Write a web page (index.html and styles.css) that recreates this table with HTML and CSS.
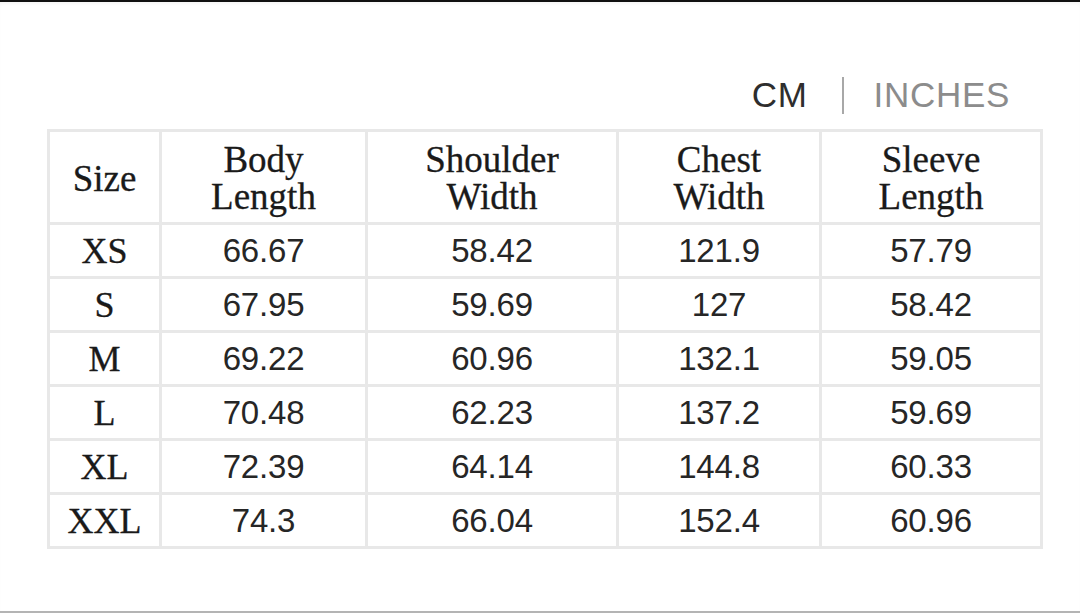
FILE: index.html
```html
<!DOCTYPE html>
<html lang="en">
<head>
<meta charset="utf-8">
<title>Size Chart</title>
<link rel="stylesheet" href="styles.css">
</head>
<body>
<div class="page">
  <div class="units">
    <span class="unit active">CM</span>
    <span class="divider"></span>
    <span class="unit">INCHES</span>
  </div>
  <div class="chart">
    <div class="cell head">Size</div>
    <div class="cell head">Body<br>Length</div>
    <div class="cell head">Shoulder<br>Width</div>
    <div class="cell head">Chest<br>Width</div>
    <div class="cell head">Sleeve<br>Length</div>

    <div class="cell size">XS</div>
    <div class="cell num">66.67</div>
    <div class="cell num">58.42</div>
    <div class="cell num">121.9</div>
    <div class="cell num">57.79</div>

    <div class="cell size">S</div>
    <div class="cell num">67.95</div>
    <div class="cell num">59.69</div>
    <div class="cell num">127</div>
    <div class="cell num">58.42</div>

    <div class="cell size">M</div>
    <div class="cell num">69.22</div>
    <div class="cell num">60.96</div>
    <div class="cell num">132.1</div>
    <div class="cell num">59.05</div>

    <div class="cell size">L</div>
    <div class="cell num">70.48</div>
    <div class="cell num">62.23</div>
    <div class="cell num">137.2</div>
    <div class="cell num">59.69</div>

    <div class="cell size">XL</div>
    <div class="cell num">72.39</div>
    <div class="cell num">64.14</div>
    <div class="cell num">144.8</div>
    <div class="cell num">60.33</div>

    <div class="cell size">XXL</div>
    <div class="cell num">74.3</div>
    <div class="cell num">66.04</div>
    <div class="cell num">152.4</div>
    <div class="cell num">60.96</div>
  </div>
</div>
</body>
</html>
```

FILE: styles.css
```css
* {
  box-sizing: border-box;
}

html, body {
  margin: 0;
  padding: 0;
  background: #ffffff;
}

body {
  width: 1080px;
  height: 613px;
  overflow: hidden;
}

.page {
  height: 613px;
  border-top: 2px solid #111111;
  border-bottom: 2px solid #b4b4b4;
  padding: 72px 0 0 47px;
  display: flex;
  flex-direction: column;
  box-shadow: inset 0 3px 4px -2px rgba(0, 0, 0, 0.06);
}

.units {
  width: 963px;
  height: 42px;
  display: flex;
  justify-content: flex-end;
  align-items: center;
  font-family: "Liberation Sans", Arial, sans-serif;
  font-size: 35px;
  letter-spacing: 0.7px;
}

.unit {
  color: #8c8c8c;
}

.unit.active {
  color: #2e2e2e;
}

.divider {
  width: 2px;
  height: 37px;
  background: #a8a8a8;
  margin: 0 30px 0 34px;
}

.chart {
  margin-top: 13px;
  width: 996px;
  display: grid;
  grid-template-columns: 109px 203px 248px 200px 218px;
  grid-template-rows: 90px repeat(6, 51px);
  gap: 3px;
  padding: 3px;
  background: #e8e8e8;
}

.cell {
  background: #ffffff;
  display: flex;
  align-items: center;
  justify-content: center;
  text-align: center;
  color: #1a1a1a;
}

.head {
  font-family: "Liberation Serif", "Times New Roman", serif;
  font-size: 37px;
  line-height: 37px;
  padding-top: 2px;
  -webkit-text-stroke: 0.3px #1a1a1a;
}

.size {
  font-family: "Liberation Serif", "Times New Roman", serif;
  font-size: 36px;
  -webkit-text-stroke: 0.3px #1a1a1a;
}

.num {
  font-family: "Liberation Sans", Arial, sans-serif;
  font-size: 33px;
  color: #262626;
  letter-spacing: -0.2px;
}
```
